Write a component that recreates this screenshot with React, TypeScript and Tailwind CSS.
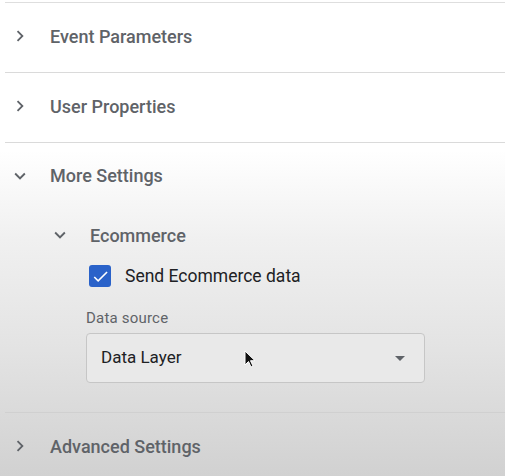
import React from "react";

const ChevronRight = () => (
  <svg width="22" height="22" viewBox="0 0 24 24" className="shrink-0 fill-[#5f6368]">
    <path d="M10 6L8.59 7.41 13.17 12l-4.58 4.59L10 18l6-6z" />
  </svg>
);

const ChevronDown = () => (
  <svg width="22" height="22" viewBox="0 0 24 24" className="shrink-0 fill-[#5f6368]">
    <path d="M16.59 8.59L12 13.17 7.41 8.59 6 10l6 6 6-6z" />
  </svg>
);

const Row = ({ label }: { label: string }) => (
  <div className="flex h-[70px] items-center border-b border-[#dadada] pb-[3px] pl-[4px]">
    <ChevronRight />
    <span className="ml-[19px] text-[18px] font-medium text-[#5f6368]">{label}</span>
  </div>
);

export default function App() {
  return (
    <div
      className="relative h-[476px] w-[505px] overflow-hidden bg-[linear-gradient(to_bottom,#ffffff_0px,#ffffff_150px,#f0f0f0_240px,#e3e3e3_350px,#d1d1d1_476px)] pt-[2px] pl-[5px]"
      style={{ fontFamily: "Roboto, 'Noto Sans', sans-serif" }}
    >
      <div className="border-t border-[#dedede]">
        <Row label="Event Parameters" />
        <Row label="User Properties" />
        <div className="border-b border-[#d0d0d0] pb-[29px]">
          <div className="flex h-[68px] items-center pb-[3px] pl-[4px]">
            <ChevronDown />
            <span className="ml-[19px] text-[18px] font-medium text-[#5f6368]">More Settings</span>
          </div>
          <div className="flex h-[50px] items-center pb-[2px] pl-[44px]">
            <ChevronDown />
            <span className="ml-[19px] text-[18px] font-medium text-[#5f6368]">Ecommerce</span>
          </div>
          <div className="flex h-[30px] items-center pl-[84px]">
            <div className="flex h-[22px] w-[22px] items-center justify-center rounded-[3px] bg-[#2a62c9]">
              <svg width="19" height="19" viewBox="0 0 24 24" className="fill-white">
                <path d="M9 16.17L4.83 12l-1.42 1.41L9 19 21 7l-1.41-1.41z" />
              </svg>
            </div>
            <span className="ml-[14px] text-[17.5px] text-[#202124]">Send Ecommerce data</span>
          </div>
          <div className="mt-[18px] pl-[81px] text-[15px] leading-[18px] tracking-[0.2px] text-[#5f6368]">Data source</div>
          <div className="relative ml-[81px] mt-[6px] flex h-[50px] w-[339px] items-center rounded-[4px] border border-[#c6c6c6] bg-[#e9e9e9] pl-[14px] pr-[19px]">
            <span className="flex-1 text-[17px] text-[#202124]">Data Layer</span>
            <svg width="10" height="5" viewBox="0 0 10 5" className="fill-[#5f6368]">
              <path d="M0 0h10L5 5z" />
            </svg>
            <svg width="12" height="19" viewBox="0 0 12 19" className="absolute left-[157px] top-[16px]">
              <path d="M1 1v14l3.5-3.5 2.5 5.5 2-1-2.5-5.3H11z" fill="#111" stroke="#fff" strokeWidth="1" />
            </svg>
          </div>
        </div>
        <div className="flex h-[66px] items-center pl-[4px]">
          <ChevronRight />
          <span className="ml-[19px] text-[18px] font-medium text-[#5f6368]">Advanced Settings</span>
        </div>
      </div>
    </div>
  );
}
